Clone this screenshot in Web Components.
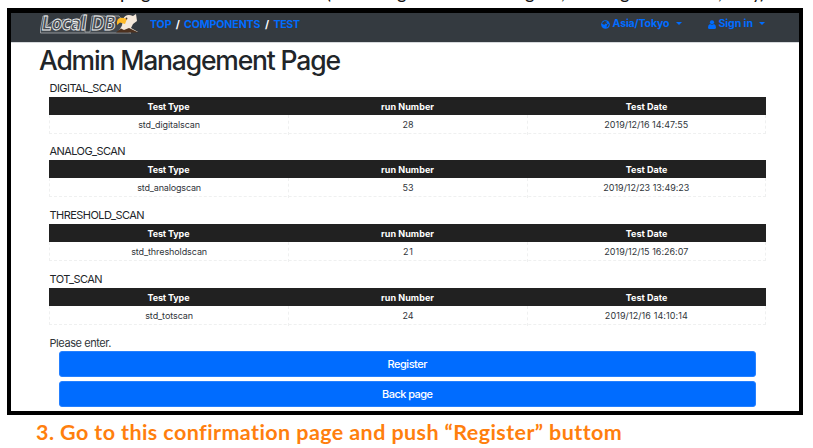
<!DOCTYPE html>
<html lang="en"><head><meta charset="utf-8"><title>Admin Management Page</title>
<style>html,body{margin:0;width:813px;height:448px;overflow:hidden;background:#fff}</style></head>
<body><slide-page></slide-page>
<script>
const define=(name,html,setup)=>customElements.define(name,class extends HTMLElement{
  connectedCallback(){
    if(this.shadowRoot)return;
    const t=document.createElement('template');t.innerHTML=html;
    this.attachShadow({mode:'open'}).append(t.content.cloneNode(true));
    if(setup)setup(this);
  }
});

// Text tracked so that its ink spans the width given in "w".
define('fit-label','<style>:host{display:inline-block;white-space:pre}span{display:inline-block}</style><span><slot></slot></span>',el=>{
  const s=el.shadowRoot.querySelector('span'),w=+el.getAttribute('w');
  const n=el.textContent.length,nat=s.getBoundingClientRect().width;
  if(w&&n>1){s.style.letterSpacing=((w-nat)/(n-1))+'px';s.style.marginRight=(-(w-nat)/(n-1))+'px';}
});

define('eagle-logo',`<style>:host{display:block;width:102px;height:24px}svg{display:block;overflow:visible}text{font:italic bold 19px "DejaVu Sans",sans-serif}</style>
<svg width="102" height="24" viewBox="0 0 102 24">
<path d="M1.5 20V16L4 3H9L8 13L14 8H22L25 6L29 9L34 7L40 8L43 2H47L46 19H51L53 3H66L70 6L73 3H80L85 9L82 15L92 20Z" fill="#41474d" stroke="#a9adb0" stroke-width=".8"/>
<text x="3" y="17" textLength="74" lengthAdjust="spacingAndGlyphs" fill="#464b51" stroke="#f2f2f2" stroke-width=".9">Local DB</text>
<path d="M79 19L83 13L84 6Q87 0 94 3L97 1L98 8L94 11L92 15L99 19Z" fill="#f5e8da"/>
<path d="M85 5Q77 3 78 12L81 9.500L86 11L88 6Z" fill="#ffba27"/>
<circle cx="87.500" cy="5.500" r=".9" fill="#4b3428"/><path d="M77 19.500L82 15.500L85 17L90 15L99.500 19.500Z" fill="#4d311f"/></svg>`);

define('nav-bar',`<style>
:host{display:flex;box-sizing:border-box;height:30px;background:#343a40;border-bottom:1px solid #d6d9dc;padding-left:28px;align-items:flex-start;font:bold 10.6px/14px Inter,sans-serif;color:#006cff}
nav{display:flex;margin:5px 0 0 9px;white-space:pre}i{font-style:normal;color:#fff;text-align:center}
.r{margin:4px 0 0 auto;display:flex;align-items:center}svg{display:block}.c{border:3px solid transparent;border-top-color:#006cff;border-bottom:0}</style>
<eagle-logo></eagle-logo>
<nav><fit-label w="21.5">TOP</fit-label><i style="width:12.5px">/</i><fit-label w="76.5">COMPONENTS</fit-label><i style="width:13px">/</i><fit-label w="26.5">TEST</fit-label></nav>
<div class="r">
<svg width="9" height="9" viewBox="0 0 18 18"><circle cx="9" cy="9" r="8.7" fill="#006cff"/><path d="M7 2L12 3L10 5L13 6L11 8L8 7L7 10L3 8L2 6ZM12 9L16 8L14 13L11 15Z" fill="#343a40"/></svg>
<fit-label w="57" style="margin-left:3px">Asia/Tokyo</fit-label><b class="c" style="margin:-2px 0 0 6px"></b>
<svg width="8" height="9" viewBox="0 0 16 18" style="margin-left:26px"><circle cx="8" cy="4.5" r="4.2" fill="#006cff"/><path d="M4 8Q8 11 12 8Q16 9 16 15Q16 18 13 18H3Q0 18 0 15Q0 9 4 8Z" fill="#006cff"/></svg>
<fit-label w="34.5" style="margin-left:3px">Sign in</fit-label><b class="c" style="margin:-2px 34px 0 6px"></b></div>`);

define('scan-table',`<style>
:host{display:block;height:63.75px;font:9px/18px Inter,sans-serif;color:#30353a}
h2{margin:0;height:15px;padding-left:.5px;font:11px/13px Inter,sans-serif;color:#212529}
.h,.b{display:grid;grid-template-columns:repeat(3,1fr);text-align:center}
.h{background:#212121;color:#fff;font-weight:700;height:18px;line-height:19px}
.b{box-sizing:border-box;height:19px;border:1px dashed #eff0f0;border-top:0;line-height:20px}.b div+div{border-left:1px dashed #eff0f0}</style>
<h2></h2><div class="h"><div><fit-label w="42">Test Type</fit-label></div><div><fit-label w="53">run Number</fit-label></div><div><fit-label w="41.5">Test Date</fit-label></div></div><div class="b"></div>`,el=>{
  const [name,nw,...v]=el.getAttribute('data').split('|');
  el.shadowRoot.querySelector('h2').innerHTML=`<fit-label w="${nw}">${name}</fit-label>`;
  el.shadowRoot.querySelector('.b').innerHTML=[0,2,4].map(i=>`<div><fit-label w="${v[i+1]}">${v[i]}</fit-label></div>`).join('');
});

define('wide-button','<style>:host{display:block;box-sizing:border-box;height:26px;border:1px solid #2580ff;border-radius:3px;background:#006cff;color:#fff;text-align:center;font:500 11px/25px Inter,sans-serif}</style><slot></slot>');

// Lower edge of the sentence that runs off the top of the slide.
define('cut-line','<style>:host{display:block;height:8px;overflow:hidden}svg{display:block}text{font:18.5px Lato,sans-serif;fill:#111}</style><svg width="813" height="8"><text y="-1" x="120 141 326 397 525 561 620 718 752 760">pg(gg,g,y)</text></svg>');

define('slide-page',`<style>
:host{display:flex;flex-direction:column;width:813px;height:448px}
.f{box-sizing:border-box;width:796px;height:407px;margin-left:7px;border:solid #000;border-width:5px 4px 4px;background:#fff}
h1{margin:0 0 0 28px;height:38.5px;font:500 26.5px/35px Inter,sans-serif;color:#212529}
section{margin:0 33px 0 38px}p{margin:0;height:14.5px;padding-left:.5px;font:11px/13px Inter,sans-serif;color:#30353a}
.btns{display:grid;gap:4px;margin:0 10px}
.cap{margin:3px 0 0 36px;font:bold 21.5px/28px Lato,sans-serif;color:#ff7f0e}</style>
<cut-line></cut-line>
<div class="f"><nav-bar></nav-bar><h1><fit-label w="302">Admin Management Page</fit-label></h1>
<section>
<scan-table data="DIGITAL_SCAN|72|std_digitalscan|62|28|11|2019/12/16 14:47:55|84"></scan-table>
<scan-table data="ANALOG_SCAN|76|std_analogscan|64|53|11|2019/12/23 13:49:23|86"></scan-table>
<scan-table data="THRESHOLD_SCAN|95|std_thresholdscan|76|21|10|2019/12/15 16:26:07|84"></scan-table>
<scan-table data="TOT_SCAN|53|std_totscan|48|24|11|2019/12/16 14:10:14|83"></scan-table>
<p><fit-label w="62">Please enter.</fit-label></p>
<div class="btns"><wide-button><fit-label w="40">Register</fit-label></wide-button><wide-button><fit-label w="51">Back page</fit-label></wide-button></div>
</section></div>
<div class="cap"><fit-label w="585">3. Go to this confirmation page and push “Register” buttom</fit-label></div>`);
</script></body></html>
